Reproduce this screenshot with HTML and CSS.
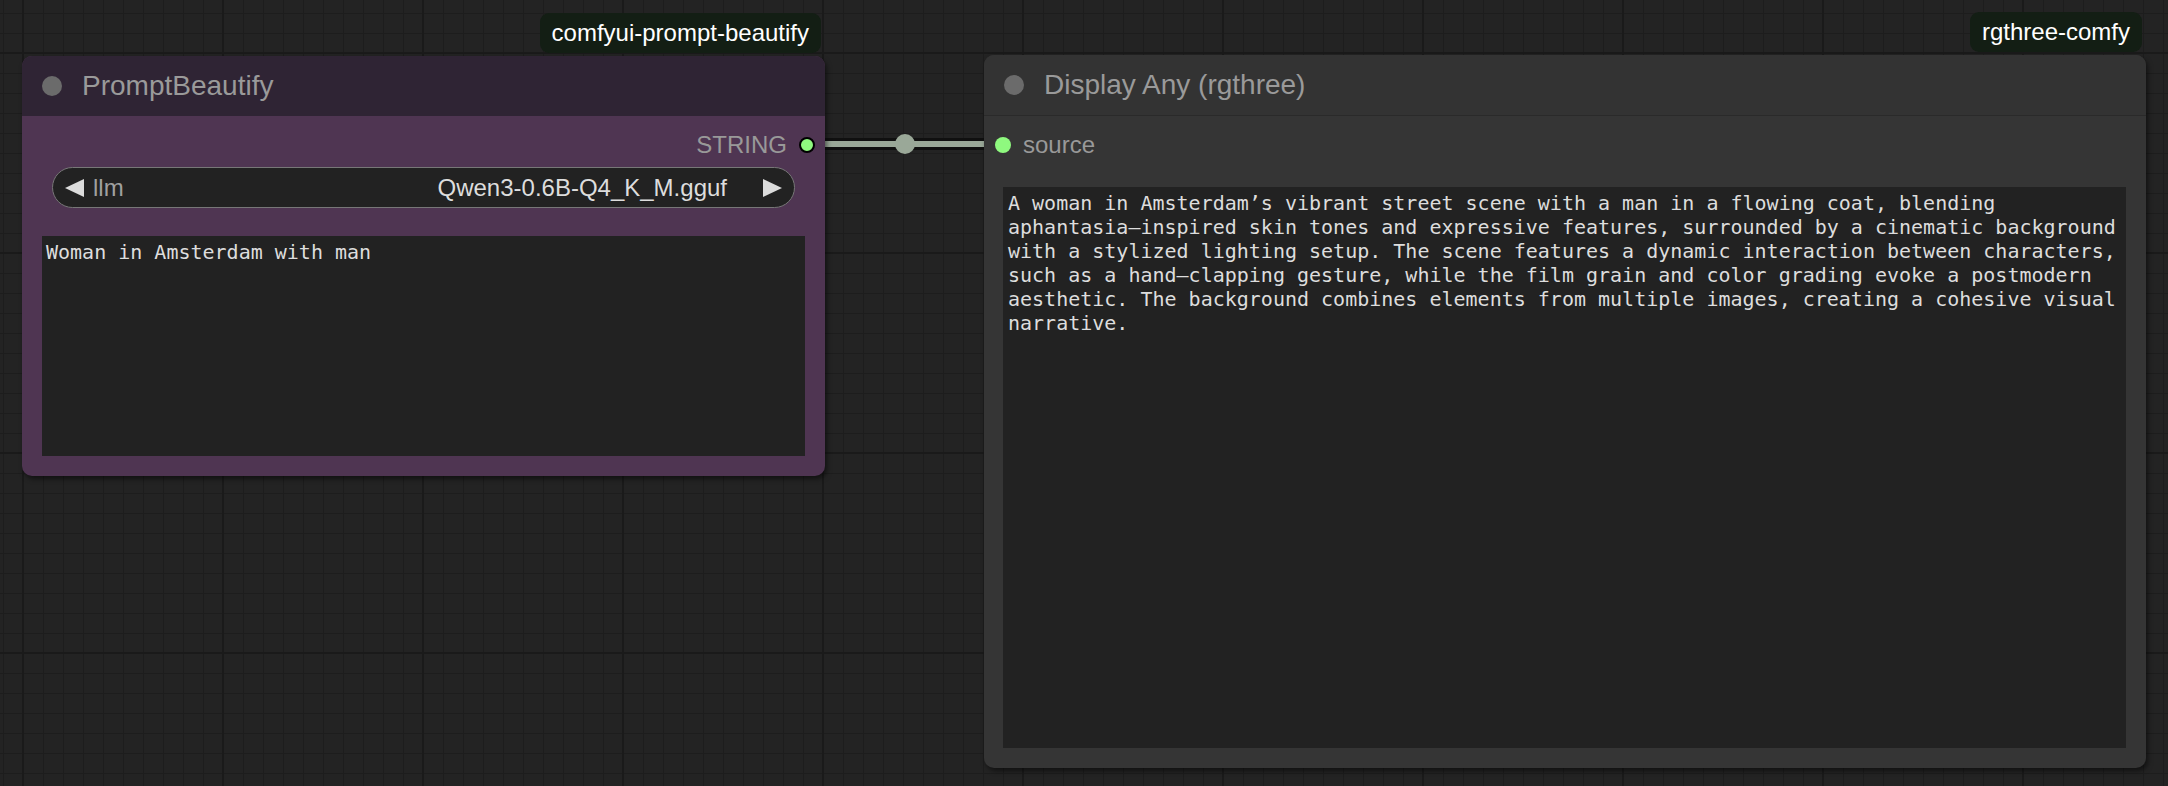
FILE: index.html
```html
<!DOCTYPE html>
<html lang="en">
<head>
<meta charset="utf-8">
<title>ComfyUI graph</title>
<link rel="stylesheet" href="styles.css">
</head>
<body>
<div class="canvas">
  <svg class="links" width="2168" height="786" viewBox="0 0 2168 786">
    <line x1="807" y1="144" x2="1003" y2="144" stroke="#101010" stroke-width="12"/>
    <line x1="807" y1="144" x2="1003" y2="144" stroke="#9aa898" stroke-width="6"/>
    <circle cx="905" cy="144" r="10" fill="#9aa898"/>
  </svg>

  <div class="node-wrap wrap-beautify">
    <div class="badge-row"><span class="badge">comfyui-prompt-beautify</span></div>
    <div class="node node-purple">
      <div class="node-title">
        <span class="status-dot"></span>
        <span class="title-text">PromptBeautify</span>
      </div>
      <div class="node-body">
        <div class="slot-row slot-out">
          <span class="slot-label">STRING</span>
          <span class="slot-dot slot-dot-out"></span>
        </div>
        <div class="combo">
          <svg class="arrow" width="19" height="18" viewBox="0 0 19 18"><polygon points="19,0 19,18 0,9" fill="#dcdcdc"/></svg>
          <span class="combo-label">llm</span>
          <span class="combo-value">Qwen3-0.6B-Q4_K_M.gguf</span>
          <svg class="arrow arrow-right" width="19" height="18" viewBox="0 0 19 18"><polygon points="0,0 0,18 19,9" fill="#dcdcdc"/></svg>
        </div>
        <div class="text-box text-box-prompt">Woman in Amsterdam with man</div>
      </div>
    </div>
  </div>

  <div class="node-wrap wrap-display">
    <div class="badge-row"><span class="badge">rgthree-comfy</span></div>
    <div class="node node-grey">
      <div class="node-title node-title-grey">
        <span class="status-dot"></span>
        <span class="title-text">Display Any (rgthree)</span>
      </div>
      <div class="node-body node-body-grey">
        <div class="slot-row slot-in">
          <span class="slot-dot slot-dot-in"></span>
          <span class="slot-label">source</span>
        </div>
        <div class="text-box text-box-display">A woman in Amsterdam’s vibrant street scene with a man in a flowing coat, blending aphantasia–inspired skin tones and expressive features, surrounded by a cinematic background with a stylized lighting setup. The scene features a dynamic interaction between characters, such as a hand–clapping gesture, while the film grain and color grading evoke a postmodern aesthetic. The background combines elements from multiple images, creating a cohesive visual narrative.</div>
      </div>
    </div>
  </div>
</div>
</body>
</html>
```

FILE: styles.css
```css
html, body {
  margin: 0;
  padding: 0;
}

body {
  width: 2168px;
  height: 786px;
  overflow: hidden;
  font-family: "Liberation Sans", Arial, sans-serif;
  background-color: #232323;
  background-image:
    linear-gradient(to right, #1a1a1a 2px, transparent 2px),
    linear-gradient(to bottom, #1a1a1a 2px, transparent 2px),
    linear-gradient(to right, #1d1d1d 1px, transparent 1px),
    linear-gradient(to bottom, #1d1d1d 1px, transparent 1px);
  background-size: 200px 200px, 200px 200px, 20px 20px, 20px 20px;
  background-position: 22px 0, 0 52px, 3px 0, 0 13px;
}

.canvas {
  position: relative;
  width: 2168px;
  height: 786px;
}

.links {
  position: absolute;
  left: 0;
  top: 0;
}

.node-wrap {
  position: absolute;
  display: flex;
  flex-direction: column;
}

.wrap-beautify {
  left: 22px;
  top: 13px;
  width: 803px;
}

.wrap-display {
  left: 984px;
  top: 12px;
  width: 1162px;
}

.badge-row {
  display: flex;
  justify-content: flex-end;
  padding-right: 4px;
  margin-bottom: 3px;
}

.badge {
  height: 40px;
  line-height: 40px;
  padding: 0 12px;
  border-radius: 9px;
  background: #131e14;
  color: #ffffff;
  font-size: 24px;
}

.node {
  display: flex;
  flex-direction: column;
  border-radius: 10px;
  box-shadow: 2px 3px 5px rgba(0, 0, 0, 0.5);
}

.node-purple {
  height: 420px;
  background: #4f3552;
}

.node-grey {
  height: 713px;
  background: #353535;
}

.node-title {
  height: 60px;
  flex: none;
  display: flex;
  align-items: center;
  padding-left: 20px;
  gap: 20px;
  border-radius: 10px 10px 0 0;
  background: #2f2434;
}

.node-title-grey {
  height: 60px;
  background: #333333;
  border-bottom: 1px solid #2a2a2a;
}

.status-dot {
  width: 20px;
  height: 20px;
  border-radius: 50%;
  background: #6b6b6b;
}

.title-text {
  font-size: 28px;
  color: #9a9a9a;
}

.node-body {
  flex: 1;
  display: flex;
  flex-direction: column;
  padding: 0 20px 20px 20px;
  min-height: 0;
}

.node-body-grey {
  padding-left: 19px;
}

.slot-row {
  height: 30px;
  margin-top: 14px;
  display: flex;
  align-items: center;
  gap: 12px;
  flex: none;
}

.slot-out {
  justify-content: flex-end;
  margin-right: -10px;
}

.slot-in {
  margin-left: -8px;
}

.slot-label {
  font-size: 24px;
  color: #999999;
}

.slot-dot {
  border-radius: 50%;
  background: #8ff97f;
  box-sizing: border-box;
}

.slot-dot-out {
  width: 16px;
  height: 16px;
  border: 2px solid #000000;
}

.slot-dot-in {
  width: 16px;
  height: 16px;
}

.combo {
  flex: none;
  height: 41px;
  box-sizing: border-box;
  margin: 7px 10px 0 10px;
  padding: 0 12px;
  display: flex;
  align-items: center;
  border: 1px solid #777777;
  border-radius: 21px;
  background: #222222;
  font-size: 24px;
}

.combo-label {
  margin-left: 9px;
  color: #a0a0a0;
}

.combo-value {
  margin-left: auto;
  color: #dddddd;
}

.arrow-right {
  margin-left: 36px;
}

.text-box {
  box-sizing: border-box;
  background: #222222;
  padding: 4px 5px;
  font-family: "DejaVu Sans Mono", "Liberation Mono", monospace;
  font-size: 20px;
  line-height: 24px;
  color: #dddddd;
  overflow: hidden;
}

.text-box-prompt {
  margin-top: 28px;
  height: 220px;
  flex: none;
  padding-left: 4px;
}

.text-box-display {
  margin-top: 27px;
  flex: 1;
}
```
